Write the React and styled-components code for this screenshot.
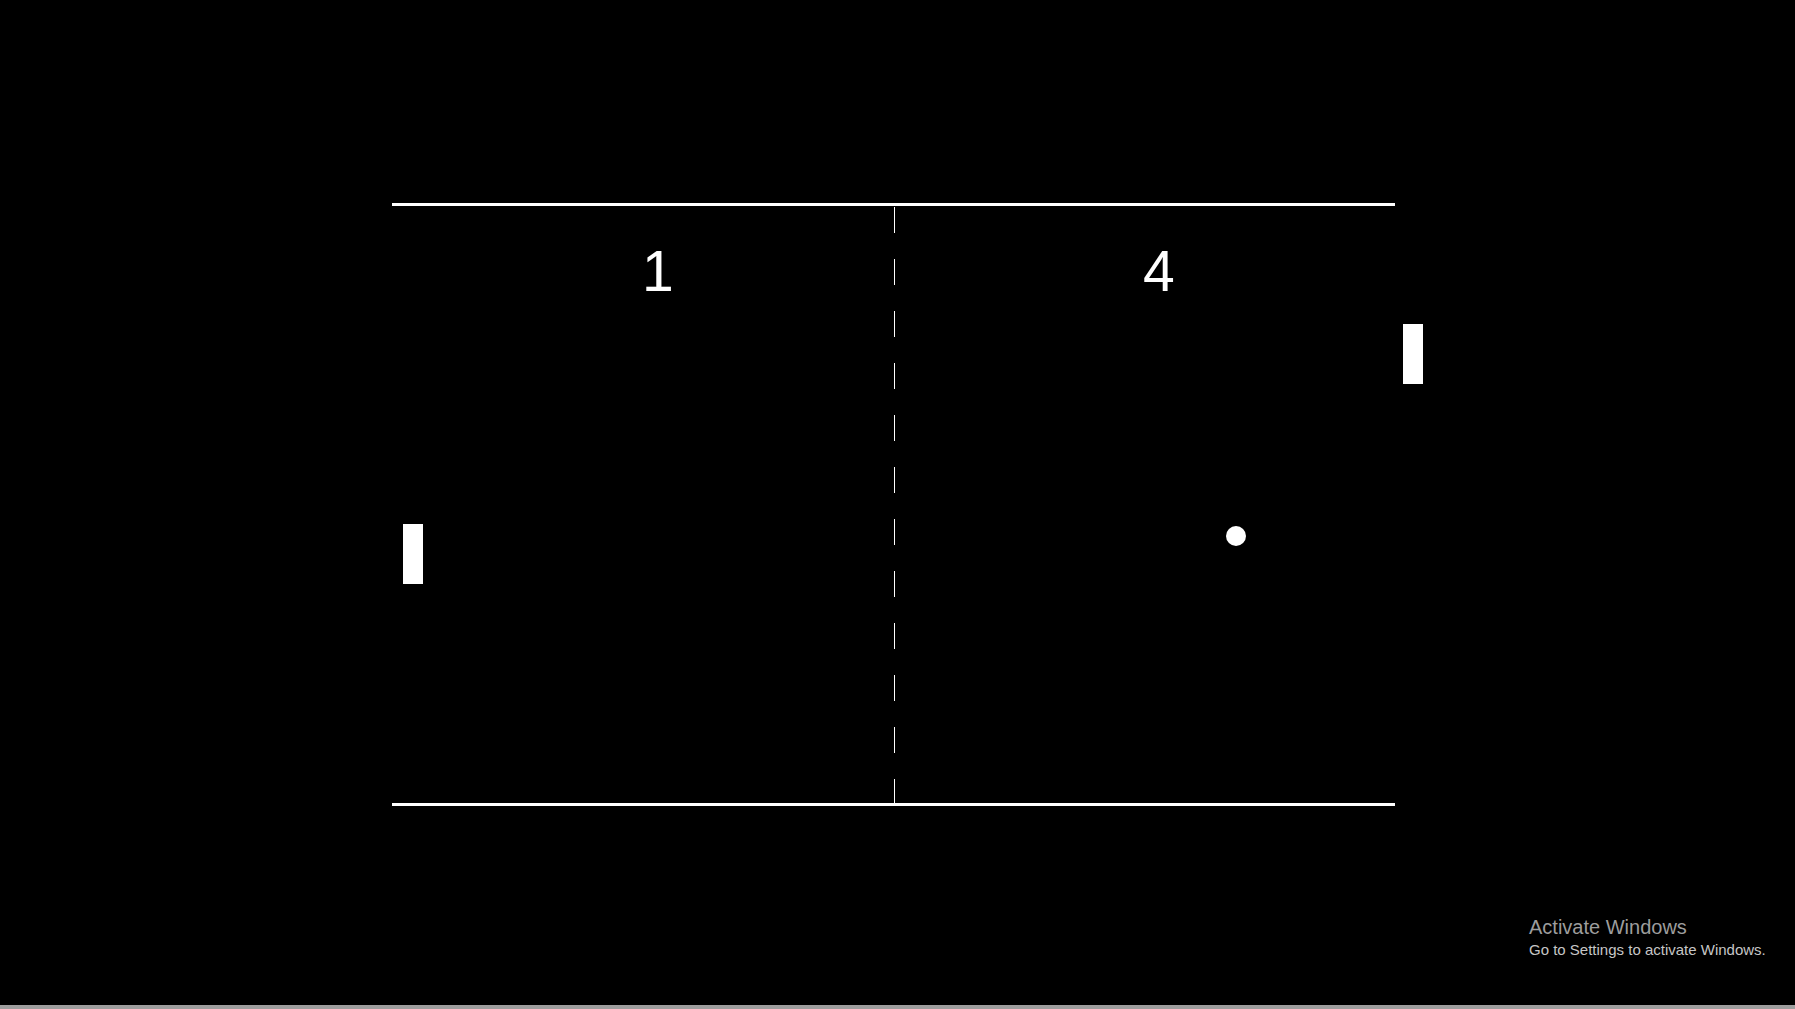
import React from "react";
import styled, { createGlobalStyle } from "styled-components";

const Global = createGlobalStyle`
  html, body {
    margin: 0;
    padding: 0;
    background: #000;
    overflow: hidden;
  }
  #root {
    height: 1009px;
  }
`;

const Desktop = styled.div`
  position: relative;
  height: 1009px;
  display: flex;
  flex-direction: column;
  background: #000;
  font-family: "Liberation Sans", Arial, sans-serif;
`;

const Screen = styled.main`
  flex: 1;
  padding: 203px 0 0 392px;
  box-sizing: border-box;
`;

const Field = styled.div`
  position: relative;
  width: 1003px;
  height: 603px;
  box-sizing: border-box;
  border-top: 3px solid #fff;
  border-bottom: 3px solid #fff;
  display: flex;
`;

const Half = styled.div`
  flex: 1;
  padding: 37px 0 0 ${(p) => p.$inset}px;
`;

const Score = styled.div`
  color: #fff;
  font-family: "Liberation Sans", Arial, sans-serif;
  font-size: 57px;
  line-height: 1;
`;

const Net = styled.div`
  width: 1px;
  margin-top: 1px;
  background: repeating-linear-gradient(
    to bottom,
    #fff 0,
    #fff 26px,
    transparent 26px,
    transparent 52px
  );
`;

const Paddle = styled.div`
  position: absolute;
  width: 20px;
  height: 60px;
  background: #fff;
`;

const Ball = styled.div`
  position: absolute;
  width: 20px;
  height: 20px;
  border-radius: 50%;
  background: #fff;
`;

const Watermark = styled.div`
  position: absolute;
  left: 1529px;
  top: 915px;
  font-family: "Liberation Sans", Arial, sans-serif;
`;

const WmTitle = styled.div`
  color: #9d9d9d;
  font-size: 20px;
  line-height: 24px;
`;

const WmSub = styled.div`
  margin-top: 1px;
  color: #c6c6c6;
  font-size: 15px;
  line-height: 20px;
`;

const TaskbarEdge = styled.div`
  height: 4px;
  background: #9e9e9e;
`;

export default function App() {
  const left = { score: 1, paddleY: 318 };
  const right = { score: 4, paddleY: 118 };
  const ball = { x: 834, y: 320 };
  return (
    <>
      <Global />
      <Desktop>
        <Screen>
          <Field>
            <Half $inset={250}>
              <Score>{left.score}</Score>
            </Half>
            <Net />
            <Half $inset={248}>
              <Score>{right.score}</Score>
            </Half>
            <Paddle style={{ left: 11, top: left.paddleY }} />
            <Paddle style={{ left: 1011, top: right.paddleY }} />
            <Ball style={{ left: ball.x, top: ball.y }} />
          </Field>
        </Screen>
        <TaskbarEdge />
        <Watermark>
          <WmTitle>Activate Windows</WmTitle>
          <WmSub>Go to Settings to activate Windows.</WmSub>
        </Watermark>
      </Desktop>
    </>
  );
}
